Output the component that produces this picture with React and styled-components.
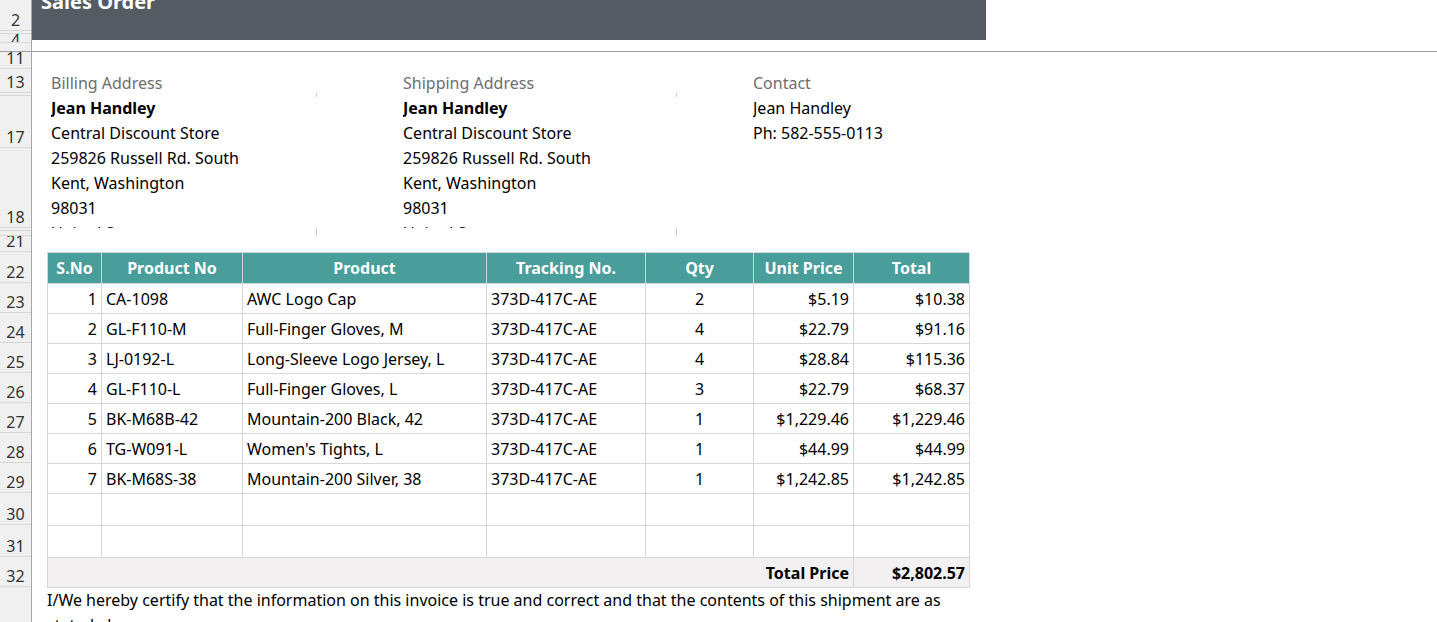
import React from "react";
import styled, { createGlobalStyle } from "styled-components";

const GlobalStyle = createGlobalStyle`
  html, body {
    margin: 0;
    padding: 0;
    background: #fff;
    overflow: hidden;
  }
  body {
    font-family: "Noto Sans", "Open Sans", sans-serif;
    font-size: 16px;
    color: #000;
  }
`;

const Sheet = styled.div`
  width: 1437px;
  height: 622px;
  display: flex;
  flex-direction: column;
  overflow: hidden;
`;

const Pane = styled.div`
  display: flex;
  height: ${(p) => (p.height ? p.height + "px" : "auto")};
  flex: ${(p) => (p.height ? "none" : "1")};
  overflow: hidden;
`;

const HeadCol = styled.div`
  width: 31px;
  flex-shrink: 0;
  background: #f0f0f0;
  border-right: 1px solid #a8a8a8;
  display: flex;
  flex-direction: column;
`;

const RowHead = styled.div`
  height: ${(p) => p.h}px;
  flex-shrink: 0;
  box-sizing: border-box;
  border-bottom: 1px solid #d6d6d6;
  display: flex;
  align-items: ${(p) => (p.top ? "flex-start" : "flex-end")};
  justify-content: center;
  overflow: hidden;
  font-size: 16px;
  line-height: ${(p) => (p.top ? 12 : 20)}px;
  color: #333;
`;

const Splitter = styled.div`
  height: 1px;
  flex-shrink: 0;
  background: #9e9e9e;
`;

const Content = styled.div`
  flex: 1;
  display: flex;
  flex-direction: column;
  overflow: hidden;
`;

const TitleBar = styled.div`
  width: 954px;
  height: 40px;
  background: #545b63;
  overflow: hidden;
`;

const Title = styled.div`
  margin: -8px 0 0 9px;
  font-size: 20px;
  font-weight: 700;
  line-height: 20px;
  color: #fff;
`;

const Addresses = styled.div`
  display: grid;
  grid-template-columns: 270px 360px 1fr;
  height: 200px;
  margin-left: 15px;
  flex-shrink: 0;
`;

const AddressCol = styled.div`
  position: relative;
  padding-left: ${(p) => p.indent}px;

  ${(p) =>
    p.ticks &&
    `
    &::before, &::after {
      content: "";
      position: absolute;
      right: 0;
      width: 1px;
      background: #c9c9c9;
    }
    &::before { top: 41px; height: 4px; }
    &::after { top: 176px; height: 8px; }
  `}
`;

const AddressText = styled.div`
  height: 176px;
  overflow: hidden;
  padding-top: 19px;
  box-sizing: border-box;
  line-height: 25px;
`;

const Label = styled.div`
  color: #6e6e6e;
`;

const Line = styled.div`
  font-weight: ${(p) => (p.bold ? 700 : 400)};
  white-space: nowrap;
`;

const Table = styled.table`
  margin-left: 15px;
  border-collapse: collapse;
  table-layout: fixed;
  width: 922px;
  flex-shrink: 0;
`;

const Th = styled.th`
  height: 30px;
  padding: 0 4px;
  background: #499d9b;
  color: #fff;
  font-weight: 700;
  font-size: 16px;
  line-height: 20px;
  text-align: center;
  border: 1px solid #d6d6d6;
  white-space: nowrap;
`;

const Td = styled.td`
  height: ${(p) => p.h || 29}px;
  padding: 0 4px;
  border: 1px solid #d6d6d6;
  text-align: ${(p) => p.align || "left"};
  font-weight: ${(p) => (p.bold ? 700 : 400)};
  background: ${(p) => (p.shade ? "#f2f0f0" : "#fff")};
  white-space: nowrap;
  overflow: hidden;
  line-height: 20px;
`;

const Note = styled.p`
  margin: 0 0 0 15px;
  width: 922px;
  line-height: 25px;
`;

const columns = [
  { title: "S.No", width: 54 },
  { title: "Product No", width: 141 },
  { title: "Product", width: 244 },
  { title: "Tracking No.", width: 159 },
  { title: "Qty", width: 108 },
  { title: "Unit Price", width: 100 },
  { title: "Total", width: 116 },
];

const items = [
  ["CA-1098", "AWC Logo Cap", 2, "$5.19", "$10.38"],
  ["GL-F110-M", "Full-Finger Gloves, M", 4, "$22.79", "$91.16"],
  ["LJ-0192-L", "Long-Sleeve Logo Jersey, L", 4, "$28.84", "$115.36"],
  ["GL-F110-L", "Full-Finger Gloves, L", 3, "$22.79", "$68.37"],
  ["BK-M68B-42", "Mountain-200 Black, 42", 1, "$1,229.46", "$1,229.46"],
  ["TG-W091-L", "Women's Tights, L", 1, "$44.99", "$44.99"],
  ["BK-M68S-38", "Mountain-200 Silver, 38", 1, "$1,242.85", "$1,242.85"],
];

const topRows = [
  { n: 2, h: 31 },
  { n: 3, h: 3 },
  { n: 4, h: 9, top: true },
];

const bottomRows = [
  { n: 11, h: 17 },
  { n: 13, h: 24 },
  { n: 16, h: 3 },
  { n: 17, h: 52 },
  { n: 18, h: 80 },
  { n: 19, h: 3 },
  { n: 20, h: 5 },
  { n: 21, h: 16 },
  { n: 22, h: 31 },
  { n: 23, h: 30 },
  { n: 24, h: 30 },
  { n: 25, h: 30 },
  { n: 26, h: 30 },
  { n: 27, h: 30 },
  { n: 28, h: 30 },
  { n: 29, h: 30 },
  { n: 30, h: 32 },
  { n: 31, h: 32 },
  { n: 32, h: 30 },
  { n: 33, h: 60 },
];

const address = [
  "Central Discount Store",
  "259826 Russell Rd. South",
  "Kent, Washington",
  "98031",
  "United States",
];

function AddressBlock({ label, lines, indent, ticks, boldFirst }) {
  return (
    <AddressCol indent={indent} ticks={ticks}>
      <AddressText>
        <Label>{label}</Label>
        {lines.map((l, i) => (
          <Line key={i} bold={boldFirst && i === 0}>
            {l}
          </Line>
        ))}
      </AddressText>
    </AddressCol>
  );
}

export default function App() {
  return (
    <Sheet>
      <GlobalStyle />
      <Pane height={51}>
        <HeadCol>
          {topRows.map((r) => (
            <RowHead key={r.n} h={r.h} top={r.top}>
              {r.n}
            </RowHead>
          ))}
        </HeadCol>
        <Content>
          <TitleBar>
            <Title>Sales Order</Title>
          </TitleBar>
        </Content>
      </Pane>
      <Splitter />
      <Pane>
        <HeadCol>
          {bottomRows.map((r) => (
            <RowHead key={r.n} h={r.h}>
              {r.n}
            </RowHead>
          ))}
        </HeadCol>
        <Content>
          <Addresses>
            <AddressBlock
              label="Billing Address"
              lines={["Jean Handley", ...address]}
              indent={4}
              boldFirst
              ticks
            />
            <AddressBlock
              label="Shipping Address"
              lines={["Jean Handley", ...address]}
              indent={86}
              boldFirst
              ticks
            />
            <AddressBlock
              label="Contact"
              lines={["Jean Handley", "Ph: 582-555-0113"]}
              indent={76}
            />
          </Addresses>
          <Table>
            <colgroup>
              {columns.map((c) => (
                <col key={c.title} style={{ width: c.width }} />
              ))}
            </colgroup>
            <thead>
              <tr>
                {columns.map((c) => (
                  <Th key={c.title}>{c.title}</Th>
                ))}
              </tr>
            </thead>
            <tbody>
              {items.map((it, i) => (
                <tr key={it[0]}>
                  <Td align="right">{i + 1}</Td>
                  <Td>{it[0]}</Td>
                  <Td>{it[1]}</Td>
                  <Td>373D-417C-AE</Td>
                  <Td align="center">{it[2]}</Td>
                  <Td align="right">{it[3]}</Td>
                  <Td align="right">{it[4]}</Td>
                </tr>
              ))}
              {[0, 1].map((k) => (
                <tr key={"empty" + k}>
                  {columns.map((c) => (
                    <Td key={c.title} h={31} />
                  ))}
                </tr>
              ))}
              <tr>
                <Td colSpan={6} align="right" bold shade>
                  Total Price
                </Td>
                <Td align="right" bold shade>
                  $2,802.57
                </Td>
              </tr>
            </tbody>
          </Table>
          <Note>
            I/We hereby certify that the information on this invoice is true
            and correct and that the contents of this shipment are as stated
            above.
          </Note>
        </Content>
      </Pane>
    </Sheet>
  );
}
